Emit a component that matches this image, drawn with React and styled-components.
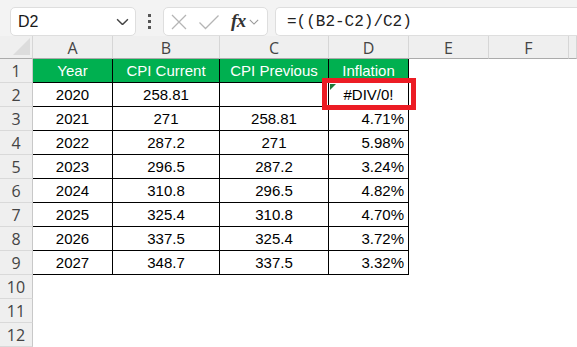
import styled, { createGlobalStyle } from 'styled-components'

const GlobalStyle = createGlobalStyle`
    html, body {
        margin: 0;
        padding: 0;
        background: #ffffff;
        font-family: "Liberation Sans", Arial, sans-serif;
    }
`

const Page = styled.div`
    width: 577px;
    height: 347px;
    overflow: hidden;
    display: flex;
    flex-direction: column;
    background: #ffffff;
`

const Toolbar = styled.div`
    height: 45px;
    box-sizing: border-box;
    padding: 7px 0 0 10px;
    display: flex;
    align-items: flex-start;
    background: #f3f3f3;
`

const Box = styled.div`
    height: 29px;
    box-sizing: border-box;
    background: #ffffff;
    border: 1px solid #dedede;
    border-radius: 5px;
    display: flex;
    align-items: center;
`

const NameBox = styled(Box)`
    width: 126px;
    padding: 0 6px 0 7px;
    justify-content: space-between;
    font-size: 16px;
    color: #1a1a1a;
`

const Dots = styled.div`
    width: 27px;
    height: 29px;
    display: flex;
    flex-direction: column;
    align-items: center;
    justify-content: center;
    gap: 3px;
    span {
        width: 3px;
        height: 3px;
        background: #555555;
    }
`

const IconBox = styled(Box)`
    width: 105px;
    padding: 0 4px 0 6px;
`

const FxText = styled.span`
    font-family: "Liberation Serif", "Times New Roman", serif;
    font-style: italic;
    font-weight: bold;
    font-size: 19px;
    color: #333333;
    margin: 0 3px 2px 11px;
    letter-spacing: -0.5px;
`

const FormulaBox = styled(Box)`
    flex: 1;
    margin-left: 7px;
    border-right: none;
    border-radius: 5px 0 0 5px;
    padding-left: 11px;
    font-family: "Liberation Mono", "DejaVu Sans Mono", monospace;
    font-size: 16px;
    color: #222222;
`

const Sheet = styled.div`
    display: grid;
    grid-template-columns: 33px 80px 107px 109px 80px 80px 80px 1fr;
    grid-template-rows: 23px;
    grid-auto-rows: 24px;
`

const ColHead = styled.div`
    box-sizing: border-box;
    background: #efefef;
    border-bottom: 1px solid #ababab;
    border-right: 1px solid #d6d6d6;
    display: flex;
    align-items: center;
    justify-content: center;
    font-family: "Open Sans", "Liberation Sans", sans-serif;
    font-size: 16px;
    color: #444444;
    padding-top: 1px;
`

const Corner = styled(ColHead)`
    position: relative;
    &::after {
        content: "";
        position: absolute;
        right: 2px;
        bottom: 3px;
        width: 0;
        height: 0;
        border-left: 17px solid transparent;
        border-bottom: 17px solid #dcdcdc;
    }
`

const RowHead = styled.div`
    box-sizing: border-box;
    background: #efefef;
    border-bottom: 1px solid #d9d9d9;
    border-right: 1px solid #c8c8c8;
    display: flex;
    align-items: center;
    justify-content: center;
    font-family: "Open Sans", "Liberation Sans", sans-serif;
    font-size: 16px;
    color: #444444;
`

const Cell = styled.div`
    position: relative;
    z-index: ${(p) => (p.$raised ? 2 : 'auto')};
    box-sizing: border-box;
    display: flex;
    align-items: center;
    justify-content: ${(p) => (p.$align === 'right' ? 'flex-end' : 'center')};
    padding: 0 4px;
    font-size: 15px;
    white-space: nowrap;
    color: ${(p) => (p.$head ? '#ffffff' : '#000000')};
    background: ${(p) => (p.$head ? '#00b050' : '#ffffff')};
    border-right: ${(p) => (p.$table ? '1px solid #000000' : 'none')};
    border-bottom: ${(p) => (p.$table ? '1px solid #000000' : 'none')};
`

const ErrorMark = styled.span`
    position: absolute;
    left: 1px;
    top: 1px;
    width: 0;
    height: 0;
    border-top: 6px solid #1f7a3a;
    border-right: 6px solid transparent;
`

const Highlight = styled.span`
    position: absolute;
    left: -7px;
    right: -8px;
    top: -5px;
    bottom: -4px;
    border: 5px solid #ec1c24;
    pointer-events: none;
`

const Chevron = ({ size = 12, color = '#333' }) => (
    <svg width={size} height={size * 0.6} viewBox="0 0 12 7" fill="none">
        <path d="M1 1 L6 6 L11 1" stroke={color} strokeWidth="1.3" />
    </svg>
)

const columns = ['A', 'B', 'C', 'D', 'E', 'F']

const data = [
    ['Year', 'CPI Current', 'CPI Previous', 'Inflation'],
    ['2020', '258.81', '', '#DIV/0!'],
    ['2021', '271', '258.81', '4.71%'],
    ['2022', '287.2', '271', '5.98%'],
    ['2023', '296.5', '287.2', '3.24%'],
    ['2024', '310.8', '296.5', '4.82%'],
    ['2025', '325.4', '310.8', '4.70%'],
    ['2026', '337.5', '325.4', '3.72%'],
    ['2027', '348.7', '337.5', '3.32%'],
]

const App = () => {
    const rows = []
    for (let r = 0; r < 12; r++) {
        rows.push(<RowHead key={`rh-${r}`}>{r + 1}</RowHead>)
        for (let c = 0; c < columns.length; c++) {
            const inTable = r < data.length && c < 4
            const value = inTable ? data[r][c] : ''
            const isError = value === '#DIV/0!'
            const align = inTable && c === 3 && r > 0 && !isError ? 'right' : 'center'
            rows.push(
                <Cell
                    key={`c-${r}-${c}`}
                    $table={inTable}
                    $head={inTable && r === 0}
                    $align={align}
                    $raised={isError}
                >
                    {isError && <ErrorMark />}
                    {value}
                    {isError && <Highlight />}
                </Cell>
            )
        }
        rows.push(<Cell key={`c-${r}-rest`} />)
    }

    return (
        <Page>
            <GlobalStyle />
            <Toolbar>
                <NameBox>
                    <span>D2</span>
                    <Chevron size={13} color="#444" />
                </NameBox>
                <Dots>
                    <span />
                    <span />
                    <span />
                </Dots>
                <IconBox>
                    <svg width="18" height="18" viewBox="0 0 18 18" fill="none">
                        <path d="M2 2 L16 16 M16 2 L2 16" stroke="#b5b5b5" strokeWidth="1.3" />
                    </svg>
                    <svg width="22" height="18" viewBox="0 0 22 18" fill="none" style={{ marginLeft: 10 }}>
                        <path d="M1.5 9.5 L7.5 15.5 L20.5 2.5" stroke="#b5b5b5" strokeWidth="1.3" />
                    </svg>
                    <FxText>fx</FxText>
                    <Chevron size={10} color="#999" />
                </IconBox>
                <FormulaBox>=((B2-C2)/C2)</FormulaBox>
            </Toolbar>
            <Sheet>
                <Corner />
                {columns.map((col) => (
                    <ColHead key={col}>{col}</ColHead>
                ))}
                <ColHead />
                {rows}
            </Sheet>
        </Page>
    )
}

export default App
